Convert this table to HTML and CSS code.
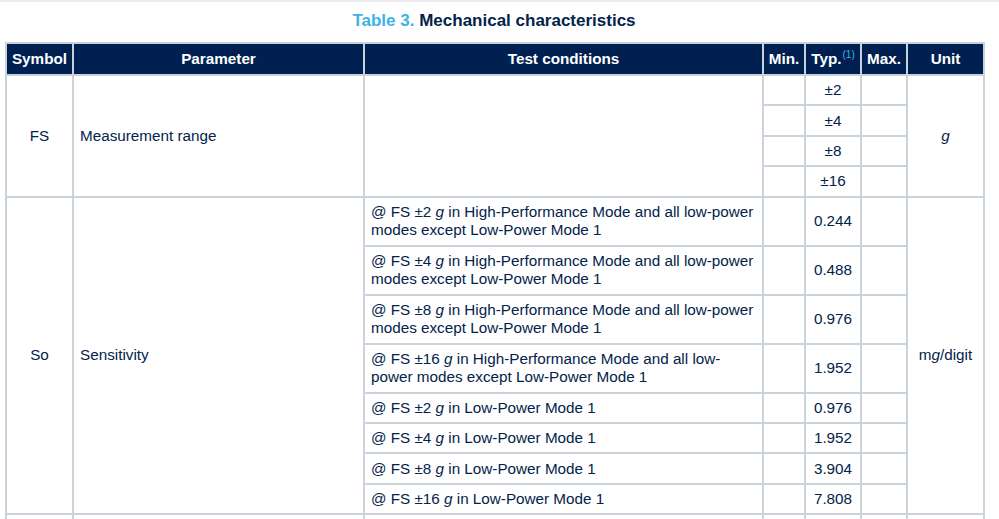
FILE: index.html
```html
<!DOCTYPE html>
<html>
<head>
<meta charset="utf-8">
<link rel="stylesheet" href="styles.css">
</head>
<body>
<div class="page">
  <div class="title"><span class="tnum">Table 3.</span> Mechanical characteristics</div>
  <table class="spec">
    <colgroup>
      <col class="c-sym"><col class="c-par"><col class="c-test"><col class="c-min"><col class="c-typ"><col class="c-max"><col class="c-unit">
    </colgroup>
    <thead>
      <tr>
        <th>Symbol</th><th>Parameter</th><th>Test conditions</th><th>Min.</th><th>Typ.<sup class="note">(1)</sup></th><th>Max.</th><th>Unit</th>
      </tr>
    </thead>
    <tbody>
      <tr class="r1">
        <td rowspan="4" class="ctr">FS</td>
        <td rowspan="4">Measurement range</td>
        <td rowspan="4"></td>
        <td></td><td class="ctr">±2</td><td></td>
        <td rowspan="4" class="ctr"><i>g</i></td>
      </tr>
      <tr class="r1"><td></td><td class="ctr">±4</td><td></td></tr>
      <tr class="r1"><td></td><td class="ctr">±8</td><td></td></tr>
      <tr class="r1"><td></td><td class="ctr">±16</td><td></td></tr>
      <tr class="r2">
        <td rowspan="8" class="ctr">So</td>
        <td rowspan="8">Sensitivity</td>
        <td>@ FS ±2 <i>g</i> in High-Performance Mode and all low-power<br>modes except Low-Power Mode 1</td>
        <td></td><td class="ctr">0.244</td><td></td>
        <td rowspan="8" class="ctr">m<i>g</i>/digit</td>
      </tr>
      <tr class="r2"><td>@ FS ±4 <i>g</i> in High-Performance Mode and all low-power<br>modes except Low-Power Mode 1</td><td></td><td class="ctr">0.488</td><td></td></tr>
      <tr class="r2"><td>@ FS ±8 <i>g</i> in High-Performance Mode and all low-power<br>modes except Low-Power Mode 1</td><td></td><td class="ctr">0.976</td><td></td></tr>
      <tr class="r2"><td>@ FS ±16 <i>g</i> in High-Performance Mode and all low-<br>power modes except Low-Power Mode 1</td><td></td><td class="ctr">1.952</td><td></td></tr>
      <tr class="r1"><td>@ FS ±2 <i>g</i> in Low-Power Mode 1</td><td></td><td class="ctr">0.976</td><td></td></tr>
      <tr class="r1"><td>@ FS ±4 <i>g</i> in Low-Power Mode 1</td><td></td><td class="ctr">1.952</td><td></td></tr>
      <tr class="r1"><td>@ FS ±8 <i>g</i> in Low-Power Mode 1</td><td></td><td class="ctr">3.904</td><td></td></tr>
      <tr class="r1"><td>@ FS ±16 <i>g</i> in Low-Power Mode 1</td><td></td><td class="ctr">7.808</td><td></td></tr>
      <tr class="r1"><td></td><td></td><td></td><td></td><td></td><td></td><td></td></tr>
    </tbody>
  </table>
</div>
</body>
</html>
```
FILE: styles.css
```css
html, body {
  margin: 0;
  padding: 0;
  background: #ffffff;
  overflow: hidden;
}
.page {
  height: 519px;
  overflow: hidden;
  border-top: 2px solid #ececec;
  box-sizing: border-box;
  padding: 0 0 0 5px;
  font-family: "Liberation Sans", Arial, sans-serif;
  color: #03234b;
}
.title {
  width: 978px;
  text-align: center;
  font-size: 17px;
  font-weight: bold;
  line-height: 22px;
  padding-top: 8px;
  height: 32px;
  color: #03234b;
}
.tnum {
  color: #3cb4e6;
}
.spec {
  width: 978px;
  table-layout: fixed;
  border-collapse: collapse;
  font-size: 15.25px;
  line-height: 18px;
}
.c-sym { width: 67px; }
.c-par { width: 291px; }
.c-test { width: 399px; }
.c-min { width: 42px; }
.c-typ { width: 56px; }
.c-max { width: 46px; }
.c-unit { width: 77px; }
.spec th {
  background: #002052;
  color: #ffffff;
  font-weight: bold;
  font-size: 15.25px;
  height: 30px;
  padding: 0;
  border: 2px solid #c9d1da;
  text-align: center;
  white-space: nowrap;
}
.spec td {
  border: 2px solid #cbd3dc;
  padding: 0 0 0 6px;
  vertical-align: middle;
  text-align: left;
}
.spec td.ctr {
  text-align: center;
  padding: 0;
}
.note {
  color: #3cb4e6;
  font-size: 10px;
  font-weight: normal;
  vertical-align: top;
  position: relative;
  top: -4px;
  margin-left: 1px;
}
.r1 { height: 30.4px; }
.r2 { height: 49px; }
```
